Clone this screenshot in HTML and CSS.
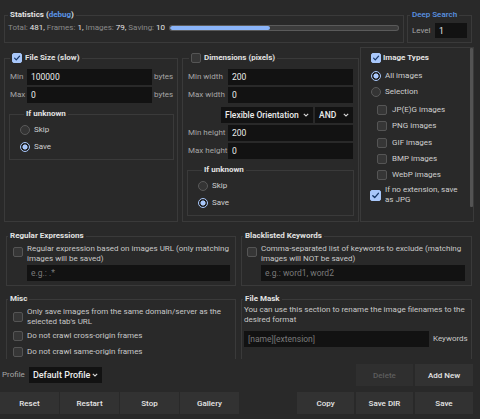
FILE: index.html
```html
<!DOCTYPE html>
<html lang="en">
<head>
<meta charset="utf-8">
<title>Image Downloader</title>
<link rel="stylesheet" href="styles.css">
</head>
<body>
<div class="page">
  <div class="row-top">
    <fieldset class="fs fs-stats">
      <legend class="lg lg-stats">Statistics (<span class="link">debug</span>)</legend>
      <div class="stats-line">
        <span class="stats-text"><span class="mut">Total:</span> 481, <span class="mut">Frames:</span> 1, <span class="mut">Images:</span> 79, <span class="mut">Saving:</span> 10</span>
        <div class="bar"><div class="bar-fill" style="width:44%"></div></div>
      </div>
    </fieldset>
    <fieldset class="fs fs-deep">
      <legend class="lg lg-deep link">Deep Search</legend>
      <div class="deep-line"><span class="lbl">Level</span><input class="inp inp-level" type="text" value="1"></div>
    </fieldset>
  </div>

  <div class="row-mid">
    <fieldset class="fs fs-size">
      <legend class="lg lg-check lg-size"><span class="cb on"><svg viewBox="0 0 10 10"><polyline points="2,5.2 4.1,7.3 8.2,2.6"/></svg></span>File Size (slow)</legend>
      <div class="fb-size">
        <div class="frow"><span class="lbl w-min">Min</span><input class="inp" type="text" value="100000"><span class="lbl unit">bytes</span></div>
        <div class="frow"><span class="lbl w-min">Max</span><input class="inp" type="text" value="0"><span class="lbl unit">bytes</span></div>
        <fieldset class="fs fs-unk">
          <legend class="lg lg-unk">If unknown</legend>
          <div class="ropt"><span class="rd"></span>Skip</div>
          <div class="ropt"><span class="rd on"></span>Save</div>
        </fieldset>
      </div>
    </fieldset>

    <fieldset class="fs fs-dims">
      <legend class="lg lg-check lg-dims"><span class="cb"></span>Dimensions (pixels)</legend>
      <div class="fb-dims">
        <div class="frow"><span class="lbl w-dim">Min width</span><input class="inp" type="text" value="200"></div>
        <div class="frow"><span class="lbl w-dim">Max width</span><input class="inp" type="text" value="0"></div>
        <div class="frow sel-row">
          <div class="sel sel-orient"><span>Flexible Orientation</span><svg class="chev" viewBox="0 0 6 4"><polyline points="0.8,0.8 3,3 5.2,0.8"/></svg></div>
          <div class="sel sel-and"><span>AND</span><svg class="chev" viewBox="0 0 6 4"><polyline points="0.8,0.8 3,3 5.2,0.8"/></svg></div>
        </div>
        <div class="frow"><span class="lbl w-dim">Min height</span><input class="inp" type="text" value="200"></div>
        <div class="frow"><span class="lbl w-dim">Max height</span><input class="inp" type="text" value="0"></div>
        <fieldset class="fs fs-unk fs-unk2">
          <legend class="lg lg-unk">If unknown</legend>
          <div class="ropt"><span class="rd"></span>Skip</div>
          <div class="ropt"><span class="rd on"></span>Save</div>
        </fieldset>
      </div>
    </fieldset>

    <div class="types">
      <div class="types-inner">
        <div class="types-head"><span class="cb on"><svg viewBox="0 0 10 10"><polyline points="2,5.2 4.1,7.3 8.2,2.6"/></svg></span>Image Types</div>
        <div class="topt"><span class="rd on"></span>All images</div>
        <div class="topt"><span class="rd"></span>Selection</div>
        <div class="tlist">
          <div class="tcheck"><span class="cb"></span>JP(E)G images</div>
          <div class="tcheck"><span class="cb"></span>PNG images</div>
          <div class="tcheck"><span class="cb"></span>GIF images</div>
          <div class="tcheck"><span class="cb"></span>BMP images</div>
          <div class="tcheck"><span class="cb"></span>WebP images</div>
        </div>
        <div class="tnoext"><span class="cb on"><svg viewBox="0 0 10 10"><polyline points="2,5.2 4.1,7.3 8.2,2.6"/></svg></span><span class="tnoext-text">If no extension, save as JPG</span></div>
      </div>
      <div class="thumb"></div>
    </div>
  </div>

  <div class="row-pair row-kw">
    <fieldset class="fs fs-half fs-left">
      <legend class="lg lg-plain">Regular Expressions</legend>
      <div class="fb-kw">
        <div class="kw-check"><span class="cb"></span><span>Regular expression based on images URL (only matching images will be saved)</span></div>
        <input class="inp inp-kw" type="text" placeholder="e.g.: .*">
      </div>
    </fieldset>
    <fieldset class="fs fs-half fs-right">
      <legend class="lg lg-plain">Blacklisted Keywords</legend>
      <div class="fb-kw fb-kw2">
        <div class="kw-check"><span class="cb"></span><span>Comma-separated list of keywords to exclude (matching images will NOT be saved)</span></div>
        <input class="inp inp-kw" type="text" placeholder="e.g.: word1, word2">
      </div>
    </fieldset>
  </div>

  <div class="row-pair row-misc">
    <fieldset class="fs fs-half fs-left fs-open">
      <legend class="lg lg-plain">Misc</legend>
      <div class="fb-misc">
        <div class="mopt"><span class="cb"></span><span>Only save images from the same domain/server as the selected tab's URL</span></div>
        <div class="mopt"><span class="cb"></span><span>Do not crawl cross-origin frames</span></div>
        <div class="mopt"><span class="cb"></span><span>Do not crawl same-origin frames</span></div>
      </div>
    </fieldset>
    <fieldset class="fs fs-half fs-right fs-open">
      <legend class="lg lg-plain">File Mask</legend>
      <div class="fb-mask">
        <p class="mask-desc">You can use this section to rename the image filenames to the desired format</p>
        <div class="mask-row"><input class="inp inp-mask" type="text" placeholder="[name][extension]"><span class="mask-kw">Keywords</span></div>
      </div>
    </fieldset>
  </div>

  <div class="row-profile">
    <div class="profile">
      <span class="lbl">Profile</span>
      <div class="sel sel-profile"><span>Default Profile</span><svg class="chev" viewBox="0 0 6 4"><polyline points="0.8,0.8 3,3 5.2,0.8"/></svg></div>
    </div>
    <div class="btn-group gap2">
      <button class="btn btn-disabled" disabled>Delete</button>
      <button class="btn btn-w58">Add New</button>
    </div>
  </div>

  <div class="row-actions">
    <div class="btn-group gap1">
      <button class="btn btn-w59">Reset</button>
      <button class="btn btn-w59">Restart</button>
      <button class="btn btn-w59">Stop</button>
      <button class="btn btn-w59">Gallery</button>
    </div>
    <div class="btn-group gap2">
      <button class="btn">Copy</button>
      <button class="btn">Save DIR</button>
      <button class="btn btn-w58">Save</button>
    </div>
  </div>
</div>
</body>
</html>
```

FILE: styles.css
```css
* { box-sizing: border-box; }
html, body { margin: 0; padding: 0; }
body {
  width: 480px;
  height: 419px;
  overflow: hidden;
  background: #292929;
  color: #d2d2d2;
  font-family: Roboto, "Noto Sans", "Liberation Sans", sans-serif;
  font-size: 8px;
  line-height: 10px;
}
.page { padding-top: 10px; }

/* fieldsets */
.fs {
  margin: 0;
  padding: 0;
  border: 1px solid #3a3a3a;
  min-width: 0;
}
.lg {
  padding: 0 2px;
  line-height: 10px;
  font-weight: 700;
  color: #e2e2e2;
}
.lg-check { display: flex; align-items: center; gap: 3px; }
.link { color: #5b95e6; }
.lg-stats { margin-left: 3px; }
.lg-deep { margin-left: 2px; font-weight: 500; }
.lg-size { margin-left: 5px; }
.lg-dims { margin-left: 6px; }
.lg-unk { margin-left: 4px; }
.lg-plain { margin-left: 1px; }

.lbl { color: #a6a6a6; }
.mut { color: #8a8a8a; }

/* inputs */
.inp {
  flex: 1;
  min-width: 0;
  height: 16px;
  margin: 0;
  padding: 0 4px;
  border: none;
  outline: none;
  background: #121212;
  color: #ececec;
  font-family: inherit;
  font-size: 8.5px;
}
.inp::placeholder { color: #7a7a7a; }

/* checkbox & radio */
.cb {
  flex: none;
  width: 10px;
  height: 10px;
  border: 1px solid #555;
  border-radius: 2px;
  background: #363636;
  display: inline-flex;
}
.cb.on { background: #a8c7fa; border-color: #a8c7fa; }
.cb svg { width: 100%; height: 100%; }
.cb polyline { fill: none; stroke: #143566; stroke-width: 1.5; stroke-linecap: round; stroke-linejoin: round; }
.rd {
  flex: none;
  width: 10px;
  height: 10px;
  border-radius: 50%;
  border: 1px solid #5a5a5a;
  background: #343434;
}
.rd.on {
  border: 1.5px solid #a8c7fa;
  background: radial-gradient(circle, #a8c7fa 0 2.3px, #1e1e1e 2.8px);
}

/* selects */
.sel {
  display: flex;
  align-items: center;
  justify-content: space-between;
  height: 16px;
  padding: 0 4px;
  background: #121212;
  color: #ececec;
  font-size: 8.5px;
  font-weight: 500;
}
.chev { width: 6px; height: 4px; flex: none; }
.chev polyline { fill: none; stroke: #d8d8d8; stroke-width: 1.1; }

/* top row */
.row-top { display: flex; gap: 3px; margin-left: 4px; }
.fs-stats { width: 400px; }
.stats-line { display: flex; align-items: center; padding: 3px 5px 9px 3px; }
.stats-text { color: #e6e6e6; white-space: nowrap; }
.bar {
  flex: 1;
  height: 4px;
  margin-left: 5px;
  border-radius: 2px;
  background: #3c3c3c;
  box-shadow: 0 0 0 1px #5a5a5a;
  overflow: hidden;
}
.bar-fill { height: 100%; background: #8ab4f8; border-radius: 2px; }
.fs-deep { width: 65px; }
.deep-line { display: flex; align-items: center; padding: 3px 4px 4px 4px; }
.inp-level { flex: none; width: 32px; height: 15px; margin-left: auto; }

/* middle row */
.row-mid { display: flex; height: 175px; margin-top: 4px; margin-left: 4px; }
.fs-size { width: 174px; margin-top: 6px; }
.fs-dims { width: 177px; margin-top: 6px; margin-left: 4px; }
.fb-size { padding: 6px 5px 0 5px; display: flex; flex-direction: column; gap: 2px; }
.fb-dims { padding: 6px 5px 0 5px; display: flex; flex-direction: column; gap: 2px; }
.frow { display: flex; align-items: center; height: 16px; }
.w-min { width: 17px; flex: none; }
.w-dim { width: 40px; flex: none; }
.unit { margin-left: 2px; width: 18px; flex: none; }
.sel-row { justify-content: flex-end; gap: 2px; margin-top: 2px; }
.sel-orient { width: 92px; }
.sel-and { width: 38px; }

.fs-unk { margin: 4px -2px 0 -1px; padding: 2px 0 4px 10px; }
.fs-unk2 { margin: 4px -1px 0 -1px; }
.ropt { display: flex; align-items: center; gap: 4px; height: 17px; color: #cfcfcf; }

.types {
  width: 114px;
  margin-left: 1px;
  border: 1px solid #3a3a3a;
  display: flex;
}
.types-inner { flex: 1; padding: 5px 0 0 10px; color: #cfcfcf; }
.thumb { width: 3px; margin-bottom: 14px; background: #545454; border-radius: 1px; }
.types-head { display: flex; align-items: center; gap: 2px; height: 10px; font-weight: 700; color: #e2e2e2; }
.types-head .cb { width: 10px; height: 10px; }
.topt { display: flex; align-items: center; gap: 4px; height: 16px; }
.types-head + .topt { margin-top: 5px; }
.tlist { margin-top: 2px; padding-left: 6px; }
.tcheck { display: flex; align-items: center; gap: 5px; height: 16.25px; }
.tnoext { display: flex; align-items: center; gap: 4px; margin-top: 2px; margin-left: -1px; }
.tnoext .cb { width: 11px; height: 11px; }
.tnoext-text { width: 76px; }

/* keyword rows */
.row-pair { display: flex; gap: 5px; margin-left: 6px; }
.row-kw { margin-top: 9px; }
.fs-left { width: 230px; }
.fs-right { width: 231px; }
.fb-kw { padding: 3px 5px 4px 6px; }
.fb-kw2 { padding: 3px 6px 4px 5px; }
.kw-check { display: flex; align-items: flex-start; gap: 4px; color: #c8c8c8; }
.kw-check .cb { margin-top: 3px; }
.inp-kw { display: block; width: calc(100% - 14px); margin: 1px 0 0 14px; }

.row-misc { margin-top: 8px; }
.fs-open { border-bottom: none; }
.fb-misc { padding: 3px 5px 0 6px; display: flex; flex-direction: column; gap: 2px; }
.mopt { display: flex; align-items: center; gap: 4px; min-height: 14px; color: #c8c8c8; }
.fb-mask { padding: 1px 5px 0 2px; }
.mask-desc { margin: 0; color: #c8c8c8; }
.mask-row { display: flex; align-items: center; margin-top: 6px; }
.inp-mask { flex: none; width: 185px; }
.mask-kw { margin-left: 4px; color: #c8c8c8; }

/* profile row */
.row-profile {
  display: flex;
  justify-content: space-between;
  align-items: center;
  margin-top: 5px;
  margin-left: 2px;
  margin-right: 7px;
}
.profile { display: flex; align-items: center; gap: 4px; }
.sel-profile { width: 73px; font-size: 9px; }

.btn-group { display: flex; }
.gap1 { gap: 1px; }
.gap2 { gap: 2px; }
.btn {
  width: 57px;
  height: 22px;
  margin: 0;
  padding: 0;
  border: none;
  background: #323232;
  color: #e6e6e6;
  font-family: inherit;
  font-size: 8px;
  font-weight: 500;
}
.btn-w58 { width: 58px; }
.btn-w59 { width: 59px; }
.btn-disabled { color: #5e5e5e; background: #2f2f2f; }

.row-actions {
  display: flex;
  justify-content: space-between;
  margin-top: 6px;
  margin-right: 7px;
}
```
